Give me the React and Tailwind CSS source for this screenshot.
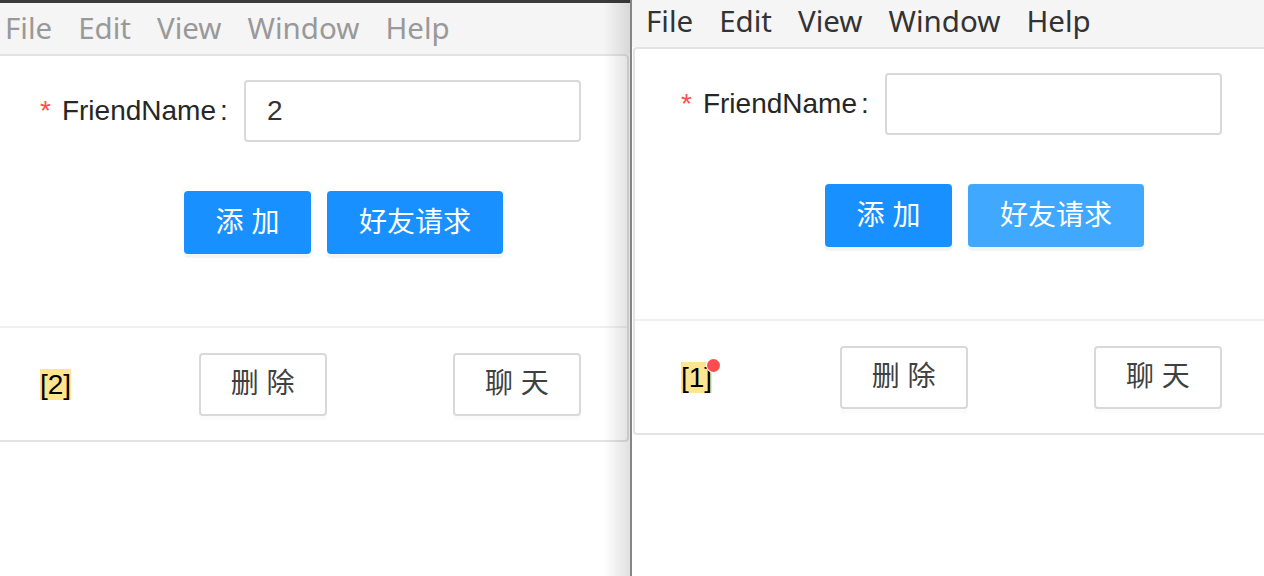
import React from 'react';

const menus = ['File', 'Edit', 'View', 'Window', 'Help'];

const MenuBar = ({ active, height }) => {
  return (
    <div className={`flex shrink-0 items-center gap-[26px] bg-[#f5f5f5] pl-[14px] font-['Noto_Sans',sans-serif] text-[29.5px] leading-[40px] ${height} ${active ? 'text-[#333]' : 'text-[#999]'}`}>
      {menus.map((m) => (
        <span key={m}>{m}</span>
      ))}
    </div>
  );
};

const FriendCard = ({ value, count, dot, hover }) => {
  return (
    <div className="ml-px w-[637px] shrink-0 rounded-[4px] border-2 border-[#e3e3e3] bg-white font-['Liberation_Sans','Noto_Sans_CJK_SC',sans-serif] text-[28px] text-[#262626]">
      <div className="px-[46px] pt-[24px] pb-[72px]">
        <div className="flex h-[62px] items-center">
          <label className="flex w-[204px] shrink-0 items-center">
            <span className="mr-[11px] text-[#ff4d4f]">*</span>
            FriendName
            <span className="ml-[4px]">:</span>
          </label>
          <div className="flex h-[62px] flex-1 items-center rounded-[4px] border-2 border-[#d9d9d9] px-[21px] text-[#333]">{value}</div>
        </div>
        <div className="mt-[49px] ml-[144px] flex gap-[16px]">
          <button className="h-[63px] w-[127px] rounded-[4px] bg-[#1890ff] text-white shadow-[0_4px_0_rgba(0,0,0,0.045)]">添 加</button>
          <button className={`h-[63px] w-[176px] rounded-[4px] text-white shadow-[0_4px_0_rgba(0,0,0,0.045)] ${hover ? 'bg-[#40a9ff]' : 'bg-[#1890ff]'}`}>好友请求</button>
        </div>
      </div>
      <div className="flex h-[114px] items-center justify-between border-t-2 border-[#f0f0f0] px-[46px]">
        <span className="relative bg-[#ffe58f] leading-[31px] text-black">
          [{count}]
          {dot && <span className="absolute top-[-3px] right-[-7.5px] h-[13px] w-[13px] rounded-full bg-[#ff4d4f] shadow-[0_0_0_1px_#fff]"></span>}
        </span>
        <button className="ml-px h-[63px] w-[128px] rounded-[4px] border-2 border-[#d9d9d9] bg-white text-[#404040] shadow-[0_4px_0_rgba(0,0,0,0.015)]">删 除</button>
        <button className="h-[63px] w-[128px] rounded-[4px] border-2 border-[#d9d9d9] bg-white text-[#404040] shadow-[0_4px_0_rgba(0,0,0,0.015)]">聊 天</button>
      </div>
    </div>
  );
};

const App = () => {
  return (
    <div className="flex h-[576px] w-[1264px] overflow-hidden bg-white">
      <div className="relative -ml-[9px] flex w-[641px] shrink-0 flex-col border-r-2 border-[#858585] bg-white">
        <div className="h-[3px] shrink-0 bg-[#3b3b3b]"></div>
        <MenuBar active={false} height="h-[51px] pb-[1px]" />
        <FriendCard value="2" count={2} />
        <div className="pointer-events-none absolute inset-y-0 right-0 w-[26px] bg-linear-to-r from-transparent to-[rgba(0,0,0,0.12)]"></div>
      </div>
      <div className="flex min-w-0 flex-1 flex-col overflow-hidden bg-white">
        <MenuBar active={true} height="h-[47px] pb-[5px]" />
        <FriendCard value="" count={1} dot hover />
      </div>
    </div>
  );
};

export default App;
